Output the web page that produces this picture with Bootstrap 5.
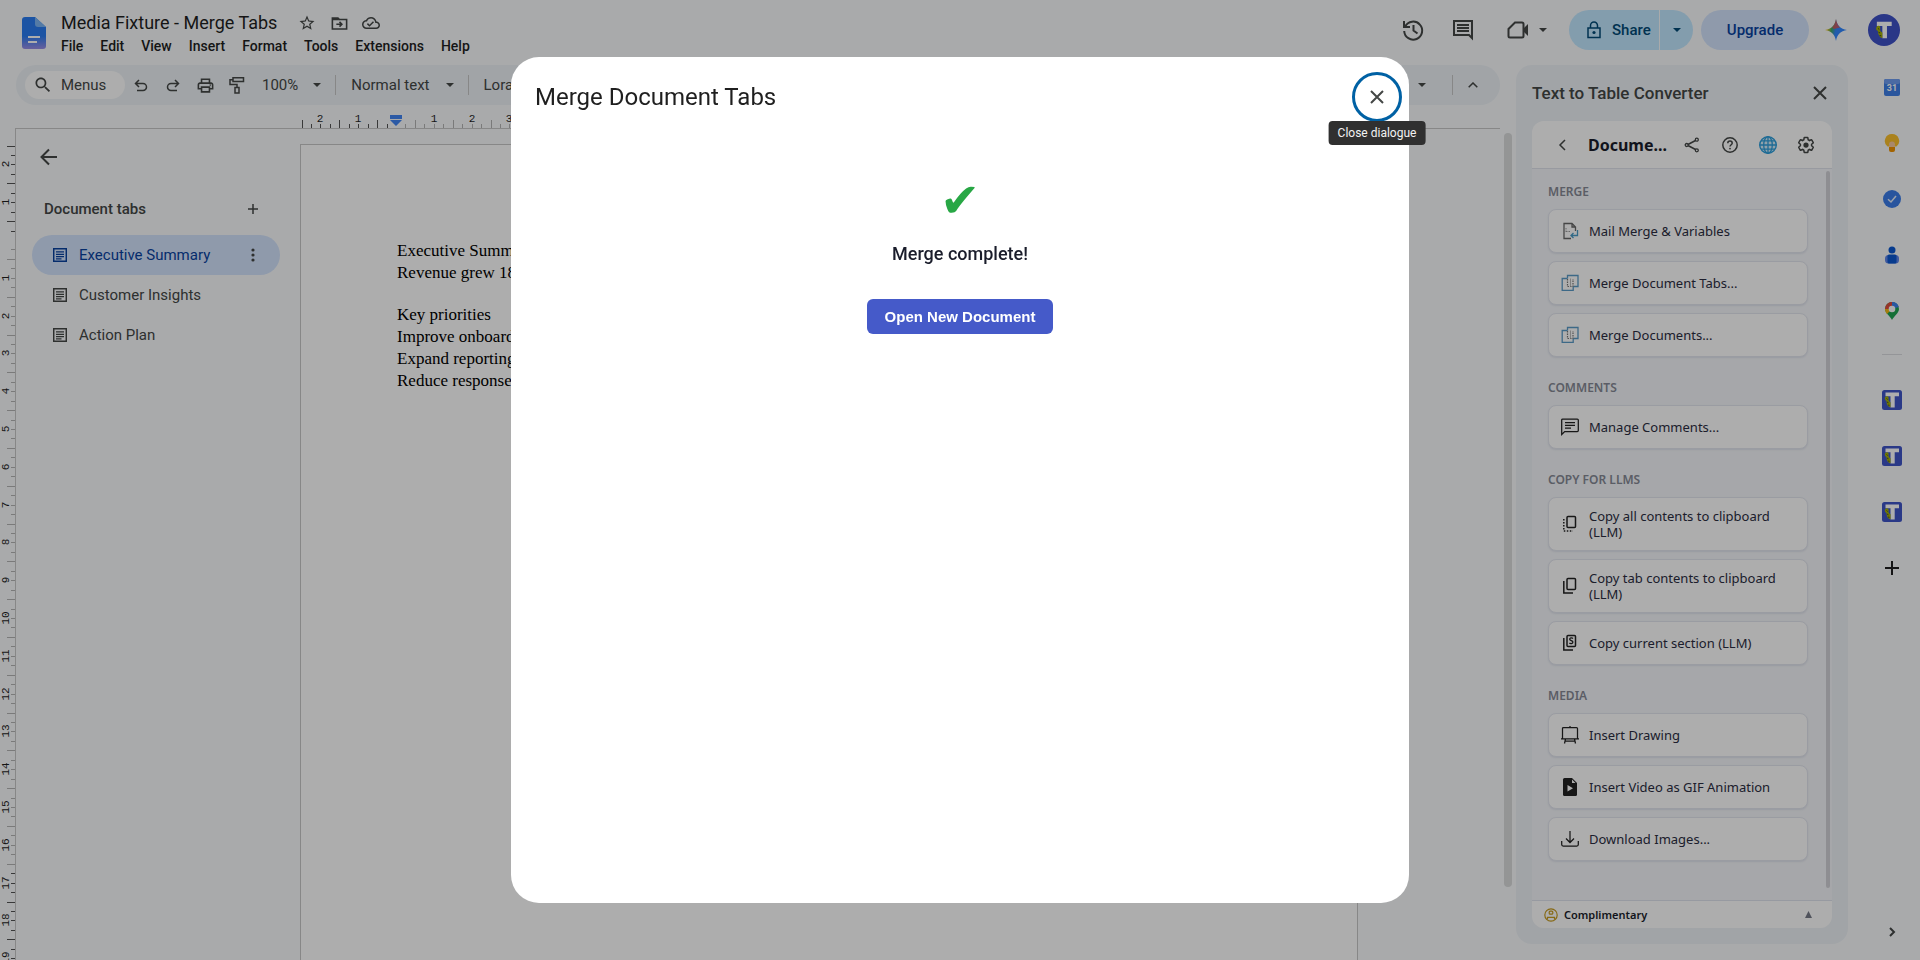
<!DOCTYPE html>
<html lang="en">
<head>
<meta charset="utf-8">
<meta name="viewport" content="width=device-width, initial-scale=1">
<title>Media Fixture - Merge Tabs</title>
<link rel="stylesheet" href="https://cdn.jsdelivr.net/npm/bootstrap@5.3.0/dist/css/bootstrap.min.css">
<style>
  :root { --ink: #1f1f1f; --ink-soft: #444746; --canvas: #f9fbfd; --bar: #edf2f6; --rule: #c7c7c7; }
  body { font-family: Roboto, "Liberation Sans", sans-serif; font-size: 15px; line-height: 20px; color: var(--ink); background: var(--canvas); }
  svg { display: block; flex: none; }
  .bare { border: 0; background: none; padding: 0; color: var(--ink-soft); display: flex; align-items: center; justify-content: center; flex: none; font-size: 15px; line-height: 20px; }
  .sq { width: 32px; height: 32px; }
  .sq-lg { width: 40px; height: 40px; }
  .ln { fill: none; stroke: currentColor; stroke-width: 2; }
  .thin { stroke-width: 1.25; }
  .mid { stroke-width: 1.5; }
  .grow-min { min-width: 0; min-height: 0; }

  .app-header { height: 65px; padding-left: 20px; }
  .title-block { margin-left: 13px; padding-top: 7px; }
  .title-row { height: 32px; gap: 14px; }
  .doc-title { font-size: 18px; line-height: 24px; font-weight: 400; margin: 0; }
  .menu-bar { gap: 17px; margin-top: -3px; font-size: 14px; font-weight: 500; }
  .menu-bar a { color: var(--ink); text-decoration: none; }
  .header-tools { margin-top: 10px; padding-right: 20px; gap: 10px; }
  .call { width: 66px; height: 40px; gap: 9px; }
  .pill { height: 40px; border: 0; font-weight: 500; }
  .share-main { background: #c2e7ff; color: #004a77; width: 90px; border-radius: 20px 0 0 20px; padding-left: 16px; gap: 9px; }
  .share-more { background: #c2e7ff; color: #004a77; width: 33px; border-radius: 0 20px 20px 0; margin-left: 1px; }
  .upgrade { background: #d3e3fd; color: #0842a0; width: 108px; border-radius: 20px; margin: 0 7px 0 8px; }
  .account { margin-left: 12px; }

  .tool-bar { height: 40px; margin: 0 16px; padding-left: 9px; border-radius: 20px; background: var(--bar); color: var(--ink-soft); }
  .menu-search { width: 100px; height: 28px; border-radius: 14px; background: #fff; padding-left: 8px; gap: 8px; }
  .zoom-level { margin: 0 15px 0 9px; }
  .bar-rule { width: 1px; height: 20px; background: var(--rule); flex: none; margin: 0 15px 0 14px; }
  .last-rule { margin: 0 4px 0 26px; }
  .style-name { margin-right: 16px; }
  .hide-menus { margin-right: 11px; }
  .h-ruler { height: 24px; margin: 0 16px 0 15px; border-bottom: 1px solid var(--rule); overflow: hidden; }
  .v-ruler { width: 16px; border-right: 1px solid var(--rule); overflow: hidden; flex: none; }
  .ruler-text { font: 11px "Liberation Mono", monospace; fill: #1f1f1f; text-anchor: middle; }

  .outline { width: 284px; padding: 12px 20px 0 16px; flex: none; }
  .outline-back { margin-left: 1px; }
  .outline-head { height: 32px; margin: 20px 0 10px; padding: 0 11px 0 12px; color: var(--ink-soft); font-weight: 500; }
  .tab-row { height: 40px; border-radius: 20px; padding: 0 11px 0 17px; gap: 8px; color: var(--ink-soft); text-decoration: none; }
  .tab-row.active { background: #d3e3fd; color: #0842a0; }
  .sheet { margin: 15px 158px 0 0; border: 1px solid var(--rule); border-bottom: 0; background: #fff; padding: 95px 96px; font: 17px/22px "Liberation Serif", serif; color: #000; }
  .sheet p { margin: 0; }
  .sheet .second { margin-top: 20px; }
  .page-scroll { width: 8px; margin: 4px 0 73px; border-radius: 4px; background: #dadcdc; right: 4px; top: 0; bottom: 0; }

  .side { width: 332px; margin-bottom: 16px; padding: 0 16px 16px; border-radius: 16px; background: var(--bar); flex: none; }
  .side-title { height: 56px; font-size: 17px; font-weight: 500; color: var(--ink-soft); padding-right: 3px; }
  .side-title .bare { width: 18px; height: 18px; }
  .addon { border-radius: 12px; background: #f5f7fb; overflow: hidden; font-family: "Noto Sans", "Open Sans", sans-serif; }
  .addon-head { height: 48px; background: #fff; border-bottom: 1px solid #e0e3ec; padding: 0 7px 0 14px; }
  .addon-head h2 { font-size: 16px; line-height: 20px; font-weight: 700; width: 84px; padding-left: 11px; color: #1a1d2b; white-space: nowrap; }
  .addon-head .bare { height: 38px; width: 38px; }
  .addon-head .back { width: 31px; }
  .addon-body { padding: 16px 24px 0 16px; }
  .addon-scroll { width: 4px; right: 2px; top: 2px; bottom: 12px; border-radius: 2px; background: #d1d2d7; }
  .group-label { font-size: 12px; line-height: 14px; font-weight: 600; color: #868a96; margin: 0 0 10px; }
  .group + .group { margin-top: 24px; }
  .act { display: flex; align-items: center; gap: 10px; width: 100%; min-height: 44px; padding: 10px 12px; border: 1px solid #e4e6ef; border-radius: 8px; background: #fff; box-shadow: 0 1px 2px rgba(40,50,110,.1); font-size: 13px; line-height: 16px; text-align: left; color: #2b2d42; }
  .act svg { color: #222; }
  .addon-foot { height: 28px; background: #fff; border-top: 1px solid #dfe3ee; padding: 0 20px 0 12px; font-size: 11px; line-height: 14px; font-weight: 600; color: #1a1d2b; gap: 6px; }

  .rail { width: 72px; padding-left: 16px; flex: none; margin-top: -6px; }
  .rail .bare { width: 56px; height: 56px; }
  .rail-rule { width: 20px; height: 1px; background: #dadce0; margin: 15px 0 17px; }
  .rail .add { color: var(--ink); }
  .cal-text { font: 700 9px Roboto, sans-serif; fill: #fff; text-anchor: middle; }

  .modal { background: rgba(0,0,0,.32); }
  .merge-dialog { max-width: 898px; height: calc(100% - 114px); margin: 57px auto; }
  .merge-dialog .modal-content { height: 100%; border: 0; border-radius: 28px; }
  .merge-head { padding: 15px 7px 0 24px; }
  .merge-head h1 { font-size: 24px; line-height: 32px; font-weight: 400; margin: 0; }
  .close-ring { width: 50px; height: 50px; border: 3px solid #0061a4; border-radius: 50%; }
  .tip { top: 49px; left: 50%; transform: translateX(-50%); background: #303030; color: #f2f2f2; border-radius: 4px; font-size: 12px; line-height: 16px; padding: 4px 9px; white-space: nowrap; }
  .tick { font: 48px/48px "DejaVu Sans", sans-serif; color: #28a745; margin-top: 54px; }
  .done { font-size: 18px; line-height: 24px; font-weight: 500; color: #1a1d2b; margin: 18px 0 33px; }
  .open-btn { background: #455ac9; color: #fff; border: 0; border-radius: 6px; font: 700 15px/17px "Liberation Sans", sans-serif; padding: 9px 18px; }
</style>
</head>
<body class="vh-100 overflow-hidden d-flex flex-column">

<svg width="0" height="0" class="position-absolute" aria-hidden="true">
  <symbol id="caret" viewBox="0 0 8 4"><path d="M0 0h8L4 4z" fill="currentColor"/></symbol>
  <symbol id="cross" viewBox="0 0 14 14"><path class="ln" d="M1 1l12 12M13 1L1 13"/></symbol>
  <symbol id="tabdoc" viewBox="0 0 14 14"><path class="ln mid" d="M.7.7h12.6v12.6H.7z"/><path d="M3 3.3h8v1.2H3zM3 5.7h8v1.2H3zM3 8h8v1.2H3zM3 10.200h5.500v1.200H3z" fill="currentColor"/></symbol>
  <symbol id="merge" viewBox="0 0 18 18"><path d="M6.500 4.500V1.500H17v11h-4.500M6.500 4.500H1.200V16.300H12.200V12.500" fill="none" stroke="#5b9bc8" stroke-width="1.300"/><path d="M6.500 5v7.500H12V5" fill="none" stroke="#777" stroke-width="1.200" stroke-dasharray="1.500 1"/><path d="M9.500 4.500v8" stroke="#bbb"/></symbol>
  <symbol id="tlogo" viewBox="0 0 20 20"><path d="M3.500 2.500H17v3.800h-4.300V17.500H8.500V6.300h-5z" fill="#fff"/><path d="M3.500 6.800c1.800-1.500 3.500 0 3 2-.300 2 .500 3 2 3.500v5C6 17 4.500 14 4.500 11 2.800 10.500 2.300 8 3.500 6.800z" fill="#a8b400"/><path d="M4.500 8.500l1.200 1M5 12l1.500.800M6 15l1.500.300" stroke="#333" stroke-width=".8"/></symbol>
  <symbol id="tapp" viewBox="0 0 20 20"><rect width="20" height="20" rx="2.500" fill="#3f55c8"/><use href="#tlogo" width="20" height="20"/></symbol>
</svg>

<header class="app-header d-flex flex-shrink-0 align-items-start">
  <svg class="mt-3" width="28" height="36" viewBox="0 0 28 36"><defs><linearGradient id="dg" x2="0" y2="1"><stop offset=".6" stop-color="#2a7df2"/><stop offset="1" stop-color="#9a8fe8"/></linearGradient></defs><path d="M5 1h10l11 10v19a3 3 0 0 1-3 3H5a3 3 0 0 1-3-3V4a3 3 0 0 1 3-3z" fill="url(#dg)"/><path d="M15 1l11 10h-8a3 3 0 0 1-3-3z" fill="#7db6f5"/><path d="M8 21h12M8 26h9" stroke="#fff" stroke-width="2"/></svg>
  <div class="title-block flex-grow-1">
    <div class="title-row d-flex align-items-center">
      <h1 class="doc-title">Media Fixture - Merge Tabs</h1>
      <div class="d-flex">
        <button class="bare sq" aria-label="Star"><svg width="18" height="18" viewBox="0 0 24 24" fill="currentColor"><path d="M22 9.240l-7.190-.620L12 2 9.190 8.630 2 9.240l5.460 4.730L5.820 21 12 17.270 18.180 21l-1.630-7.030L22 9.240zM12 15.400l-3.760 2.270 1-4.280-3.320-2.880 4.380-.380L12 6.100l1.710 4.040 4.380.380-3.320 2.880 1 4.280L12 15.400z"/></svg></button>
        <button class="bare sq" aria-label="Move"><svg width="19" height="19" viewBox="0 0 24 24"><path class="ln" d="M3 5h7l2 2h9v12H3z"/><path d="M3 5h7l2 3H3z" fill="currentColor"/><path class="ln" d="M8 13h7M12 10l3 3-3 3"/></svg></button>
        <button class="bare sq" aria-label="Saved"><svg width="18" height="18" viewBox="0 0 24 24" fill="currentColor"><path d="M19.350 10.040C18.670 6.590 15.640 4 12 4 9.110 4 6.600 5.640 5.350 8.040 2.340 8.360 0 10.910 0 14c0 3.310 2.690 6 6 6h13c2.760 0 5-2.240 5-5 0-2.640-2.050-4.780-4.650-4.960zM19 18H6c-2.210 0-4-1.790-4-4 0-2.050 1.530-3.760 3.560-3.970l1.070-.110.500-.950C8.080 7.140 9.940 6 12 6c2.620 0 4.880 1.860 5.390 4.430l.300 1.500 1.530.110c1.560.100 2.780 1.410 2.780 2.960 0 1.650-1.350 3-3 3zm-9-3.820l-2.090-2.090L6.500 13.500 10 17l6.010-6.010-1.410-1.410z"/></svg></button>
      </div>
    </div>
    <nav class="menu-bar d-flex"><a href="#">File</a><a href="#">Edit</a><a href="#">View</a><a href="#">Insert</a><a href="#">Format</a><a href="#">Tools</a><a href="#">Extensions</a><a href="#">Help</a></nav>
  </div>
  <div class="header-tools d-flex align-items-center">
    <button class="bare sq-lg" aria-label="Version history"><svg width="24" height="24" viewBox="0 0 24 24"><path class="ln" d="M4.200 8.500A9 9 0 1 1 3.200 13M3 3v6h6M12.500 7v5.500l4 3"/></svg></button>
    <button class="bare sq-lg" aria-label="Comments"><svg width="24" height="24" viewBox="0 0 24 24"><path class="ln" d="M3 3h18v17l-3-3H3z"/><path class="ln" d="M6 7h12M6 10h12M6 13h12"/></svg></button>
    <button class="bare call" aria-label="Join a call"><svg width="24" height="24" viewBox="0 0 24 24"><path class="ln" d="M9 4.500h7a1.500 1.500 0 0 1 1.500 1.500v12a1.500 1.500 0 0 1-1.500 1.500H4A1.500 1.500 0 0 1 2.500 18v-7z"/><path d="M17 11l5-5v12l-5-5z" fill="currentColor"/></svg><svg width="8" height="4"><use href="#caret"/></svg></button>
    <div class="d-flex align-items-center">
      <button class="bare pill share-main justify-content-start"><svg width="18" height="18" viewBox="0 0 18 18"><path class="ln mid" d="M3 7h12v9.500H3zM5.500 7V4.500a3.500 3.500 0 0 1 7 0V7"/><circle cx="9" cy="11.500" r="1.600" fill="currentColor"/></svg>Share</button>
      <button class="bare pill share-more" aria-label="Sharing options"><svg width="8" height="4"><use href="#caret"/></svg></button>
      <button class="bare pill upgrade">Upgrade</button>
      <button class="bare sq-lg" aria-label="Gemini"><svg width="22" height="22" viewBox="0 0 22 22"><defs><linearGradient id="gm" x1="0" y1=".4" x2="1" y2=".6"><stop offset=".1" stop-color="#f0c020"/><stop offset=".3" stop-color="#3fa860"/><stop offset=".5" stop-color="#3186ff"/><stop offset="1" stop-color="#3186ff"/></linearGradient></defs><path d="M11 0c1 6.500 4.500 10 11 11-6.500 1-10 4.500-11 11-1-6.500-4.500-10-11-11C6.500 10 10 6.500 11 0z" fill="url(#gm)"/><path d="M11 0c.6 4 2 6.500 4 8.500L9 10 7 8.500C9 6.500 10.400 4 11 0z" fill="#e8504a" opacity=".75"/></svg></button>
      <button class="bare account" aria-label="Account"><svg width="32" height="32" viewBox="0 0 32 32"><circle cx="16" cy="16" r="16" fill="#3f51c8"/><use href="#tlogo" x="5" y="5" width="22" height="22"/></svg></button>
    </div>
  </div>
</header>

<div class="d-flex flex-grow-1 grow-min">
  <main class="d-flex flex-column flex-grow-1 grow-min">
    <div class="tool-bar d-flex align-items-center flex-shrink-0">
      <button class="bare menu-search justify-content-start"><svg width="20" height="20" viewBox="0 0 24 24" fill="currentColor"><path d="M15.500 14h-.790l-.280-.270C15.410 12.590 16 11.110 16 9.500 16 5.910 13.090 3 9.500 3S3 5.910 3 9.500 5.910 16 9.500 16c1.610 0 3.090-.590 4.230-1.570l.270.280v.790l5 4.990L20.490 19l-4.990-5zm-6 0C7.010 14 5 11.990 5 9.500S7.010 5 9.500 5 14 7.010 14 9.500 11.990 14 9.500 14z"/></svg>Menus</button>
      <button class="bare sq" aria-label="Undo"><svg width="18" height="18" viewBox="0 0 18 18"><path class="ln mid" d="M7 4L3.500 7.500 7 11M4 7.500h7a3.500 3.500 0 0 1 0 7H5"/></svg></button>
      <button class="bare sq" aria-label="Redo"><svg width="18" height="18" viewBox="0 0 18 18"><path class="ln mid" d="M11 4l3.500 3.500L11 11M14 7.500H7a3.500 3.500 0 0 0 0 7h6"/></svg></button>
      <button class="bare sq" aria-label="Print"><svg width="19" height="19" viewBox="0 0 24 24" fill="currentColor"><path d="M19 8h-1V3H6v5H5c-1.660 0-3 1.340-3 3v6h4v4h12v-4h4v-6c0-1.660-1.340-3-3-3zM8 5h8v3H8V5zm8 12v2H8v-4h8v2zm2-2v-2H6v2H4v-4c0-.550.450-1 1-1h14c.550 0 1 .450 1 1v4h-2z"/><circle cx="18" cy="11.500" r="1"/></svg></button>
      <button class="bare sq" aria-label="Paint format"><svg width="18" height="18" viewBox="0 0 18 18"><path class="ln mid" d="M5 1.800h10.500v3.700H5zM5 3.700H2v4.800h7V11M7 11.500h4V17H7z"/></svg></button>
      <span class="zoom-level">100%</span><svg width="8" height="4"><use href="#caret"/></svg>
      <span class="bar-rule"></span>
      <span class="style-name">Normal text</span><svg width="8" height="4"><use href="#caret"/></svg>
      <span class="bar-rule"></span>
      <span>Lora</span>
      <svg class="ms-auto" width="8" height="4"><use href="#caret"/></svg>
      <span class="bar-rule last-rule"></span>
      <button class="bare sq hide-menus" aria-label="Hide menus"><svg width="10" height="6" viewBox="0 0 10 6"><path class="ln mid" d="M.7 5.300L5 1l4.300 4.300"/></svg></button>
    </div>
    <div class="h-ruler flex-shrink-0"><svg id="hRuler" width="1400" height="23"></svg></div>
    <div class="d-flex flex-grow-1 grow-min position-relative">
      <div class="v-ruler"><svg id="vRuler" width="15" height="1200"></svg></div>
      <div class="outline">
        <button class="bare sq outline-back" aria-label="Close tabs"><svg width="18" height="18" viewBox="0 0 18 18"><path class="ln" d="M17 9H2M9 1.500L1.500 9 9 16.500"/></svg></button>
        <div class="outline-head d-flex align-items-center justify-content-between"><span>Document tabs</span><button class="bare sq" aria-label="Add tab"><svg width="10" height="10" viewBox="0 0 10 10"><path class="ln mid" d="M5 0v10M0 5h10"/></svg></button></div>
        <nav>
          <a href="#" class="tab-row active d-flex align-items-center"><svg width="22" height="14"><use href="#tabdoc" x="4" width="14" height="14"/></svg>Executive Summary<svg class="ms-auto" width="32" height="16" viewBox="0 0 32 16" fill="#444746"><circle cx="16" cy="3" r="1.600"/><circle cx="16" cy="8" r="1.600"/><circle cx="16" cy="13" r="1.600"/></svg></a>
          <a href="#" class="tab-row d-flex align-items-center"><svg width="22" height="14"><use href="#tabdoc" x="4" width="14" height="14"/></svg>Customer Insights</a>
          <a href="#" class="tab-row d-flex align-items-center"><svg width="22" height="14"><use href="#tabdoc" x="4" width="14" height="14"/></svg>Action Plan</a>
        </nav>
      </div>
      <article class="sheet flex-grow-1">
        <p>Executive Summary</p><p>Revenue grew 18%</p>
        <p class="second">Key priorities</p><p>Improve onboarding</p><p>Expand reporting</p><p>Reduce response time</p>
      </article>
      <div class="page-scroll position-absolute"></div>
    </div>
  </main>

  <aside class="side d-flex flex-column">
    <div class="side-title d-flex align-items-center justify-content-between flex-shrink-0"><span>Text to Table Converter</span><button class="bare" aria-label="Close panel"><svg width="14" height="14"><use href="#cross"/></svg></button></div>
    <div class="addon d-flex flex-column flex-grow-1 grow-min">
      <div class="addon-head d-flex align-items-center flex-shrink-0">
        <button class="bare back" aria-label="Back"><svg width="8" height="12" viewBox="0 0 8 12"><path class="ln mid" d="M7 1L2 6l5 5"/></svg></button>
        <h2 class="m-0 me-auto">Docume...</h2>
        <button class="bare" aria-label="Share"><svg width="16" height="16" viewBox="0 0 16 16"><path class="ln mid" d="M3 8l9.500-5M3 8l9.500 5"/><g fill="#fff" stroke="currentColor" stroke-width="1.300"><circle cx="2.700" cy="8" r="1.500"/><circle cx="12.800" cy="2.700" r="1.500"/><circle cx="12.800" cy="13.300" r="1.500"/></g></svg></button>
        <button class="bare" aria-label="Help"><svg width="16" height="16" viewBox="0 0 16 16"><circle class="ln mid" cx="8" cy="8" r="7.200"/><path class="ln mid" d="M5.800 6.200c0-2.800 4.400-2.800 4.400 0 0 1.500-2.200 1.700-2.200 3.400"/><circle cx="8" cy="11.600" r=".9" fill="currentColor"/></svg></button>
        <button class="bare" aria-label="Language"><svg width="18" height="18" viewBox="0 0 18 18"><circle cx="9" cy="9" r="8.300" fill="#d5eefb" stroke="#2f9fdc" stroke-width="1.400"/><path d="M9 0v18M.5 9h17M2 4.800h14M2 13.200h14" stroke="#2f9fdc" stroke-width="1.300" fill="none"/><ellipse cx="9" cy="9" rx="4.300" ry="8.300" fill="none" stroke="#2f9fdc" stroke-width="1.300"/></svg></button>
        <button class="bare" aria-label="Settings"><svg width="18" height="18" viewBox="0 0 24 24"><path class="ln" d="M19.430 12.980c.040-.320.070-.640.070-.980s-.030-.660-.070-.980l2.110-1.650c.190-.150.240-.420.120-.640l-2-3.460c-.120-.220-.390-.300-.610-.220l-2.490 1c-.520-.400-1.080-.730-1.690-.980l-.380-2.650C14.460 2.180 14.250 2 14 2h-4c-.250 0-.460.180-.490.420l-.380 2.650c-.610.250-1.170.590-1.690.980l-2.490-1c-.230-.090-.490 0-.610.220l-2 3.460c-.130.220-.070.490.120.640l2.110 1.650c-.040.320-.070.650-.070.980s.030.660.070.980l-2.110 1.650c-.190.150-.240.420-.120.640l2 3.460c.120.220.390.300.610.220l2.490-1c.520.400 1.080.730 1.690.980l.380 2.650c.030.240.240.420.490.420h4c.250 0 .460-.180.490-.420l.380-2.650c.610-.250 1.170-.590 1.690-.980l2.490 1c.230.090.490 0 .610-.220l2-3.460c.120-.220.070-.490-.120-.640z"/><circle cx="12" cy="12" r="3.500" fill="currentColor"/></svg></button>
      </div>
      <div class="addon-body flex-grow-1 grow-min position-relative">
        <section class="group">
          <h3 class="group-label">MERGE</h3>
          <div class="d-grid gap-2">
            <button class="act"><svg width="18" height="18" viewBox="0 0 18 18"><path d="M10 16.500H3V1.500h8l3.500 3.500v4M11 1.500V5h3.500" fill="none" stroke="#666" stroke-width="1.300"/><path d="M5 6v5M5 9.500h4" stroke="#999" stroke-dasharray="1.500 1"/><path d="M16.500 8v5.500H10M12.500 11L10 13.500l2.500 2.500" fill="none" stroke="#4a9cc8" stroke-width="1.300"/></svg>Mail Merge &amp; Variables</button>
            <button class="act"><svg width="18" height="18"><use href="#merge"/></svg>Merge Document Tabs...</button>
            <button class="act"><svg width="18" height="18"><use href="#merge"/></svg>Merge Documents...</button>
          </div>
        </section>
        <section class="group">
          <h3 class="group-label">COMMENTS</h3>
          <div class="d-grid gap-2"><button class="act"><svg width="18" height="18" viewBox="0 0 18 18"><path class="ln thin" d="M.7 16.500V2a1 1 0 0 1 1-1h14.600a1 1 0 0 1 1 1v10.500a1 1 0 0 1-1 1H3.700z"/><path class="ln thin" d="M4 4.500h10M4 7.300h10M4 10h6"/></svg>Manage Comments...</button></div>
        </section>
        <section class="group">
          <h3 class="group-label">COPY FOR LLMS</h3>
          <div class="d-grid gap-2">
            <button class="act"><svg width="18" height="18" viewBox="0 0 18 18"><rect class="ln mid" x="6" y="1.500" width="8.500" height="11" rx="1"/><path class="ln mid" stroke-dasharray="1.500 1.500" d="M2.800 4v12H12"/></svg>Copy all contents to clipboard (LLM)</button>
            <button class="act"><svg width="18" height="18" viewBox="0 0 18 18"><rect class="ln mid" x="6" y="1.500" width="8.500" height="11" rx="1"/><path class="ln mid" d="M2.800 4v12H12"/></svg>Copy tab contents to clipboard (LLM)</button>
            <button class="act"><svg width="18" height="18" viewBox="0 0 18 18"><rect class="ln mid" x="6" y="1.500" width="8.500" height="11" rx="1"/><path class="ln mid" d="M2.800 4v12H12"/><path class="ln thin" d="M12 4.500c-1-1-3.500-.8-3.300.8.200 1.500 3.200 1 3.200 2.700 0 1.800-2.500 2-3.500 1"/></svg>Copy current section (LLM)</button>
          </div>
        </section>
        <section class="group">
          <h3 class="group-label">MEDIA</h3>
          <div class="d-grid gap-2">
            <button class="act"><svg width="18" height="18" viewBox="0 0 18 18"><path class="ln thin" d="M1.500 12.500V2.500a1 1 0 0 1 1-1h13a1 1 0 0 1 1 1v10M0 12.800h18M9 0v1.500M4.500 13l-1 4.500M13.500 13l1 4.500M4 15.200h10"/></svg>Insert Drawing</button>
            <button class="act"><svg width="18" height="18" viewBox="0 0 18 18"><path d="M3.500 0H11l5 5v11.500a1.500 1.500 0 0 1-1.500 1.500h-11A1.500 1.500 0 0 1 2 16.500v-15A1.500 1.500 0 0 1 3.500 0z" fill="#222"/><path d="M11 1.500L14.500 5H11zM6.500 7v6.500L12 10.200z" fill="#fff"/></svg>Insert Video as GIF Animation</button>
            <button class="act"><svg width="18" height="18" viewBox="0 0 18 18"><path class="ln thin" d="M.7 11v3.500a1.500 1.500 0 0 0 1.500 1.500h13.600a1.500 1.500 0 0 0 1.500-1.500V11M9 1v11.500M5 8.500l4 4 4-4"/></svg>Download Images...</button>
          </div>
        </section>
        <div class="addon-scroll position-absolute"></div>
      </div>
      <div class="addon-foot d-flex align-items-center flex-shrink-0"><svg width="14" height="14" viewBox="0 0 14 14" fill="none" stroke="#c79c20" stroke-width="1.200"><circle cx="7" cy="7" r="6.200"/><rect x="5.200" y="3.200" width="3.600" height="3" rx="1"/><path d="M3.500 11.500V9.300h7v2.200"/></svg>Complimentary<svg class="ms-auto" width="7" height="7" viewBox="0 0 7 7"><path d="M3.500 0L7 7H0z" fill="#777b88"/></svg></div>
    </div>
  </aside>

  <nav class="rail d-flex flex-column align-items-center">
    <button class="bare" aria-label="Calendar"><svg width="16" height="18" viewBox="0 0 16 18"><rect y="1" width="16" height="17" rx="2" fill="#3f7fe8"/><rect y="1" width="16" height="5" rx="2" fill="#6f9df0"/><text class="cal-text" x="8" y="12.500">31</text></svg></button>
    <button class="bare" aria-label="Keep"><svg width="16" height="20" viewBox="0 0 16 20"><path d="M8 1a7 7 0 0 1 4.500 12.500h-9A7 7 0 0 1 8 1z" fill="#fbc02d"/><circle cx="8" cy="11.500" r="3" fill="#f9c9a0"/><path d="M5 14h6v3a2 2 0 0 1-2 2H7a2 2 0 0 1-2-2z" fill="#f09300"/></svg></button>
    <button class="bare" aria-label="Tasks"><svg width="18" height="18" viewBox="0 0 18 18"><circle cx="9" cy="9" r="9" fill="#3b7de9"/><path d="M5 9.200l3 2.800 5-6" stroke="#e6eefc" stroke-width="1.500" fill="none"/></svg></button>
    <button class="bare" aria-label="Contacts"><svg width="14" height="18" viewBox="0 0 14 18"><circle cx="7" cy="4" r="3.500" fill="#0b57d0"/><rect y="9" width="14" height="8.500" rx="3.500" fill="#5f86ea"/><rect x="2.500" y="8.500" width="9" height="9" rx="1.500" fill="#0b57d0"/></svg></button>
    <button class="bare" aria-label="Maps"><svg width="14" height="18" viewBox="0 0 14 18"><path d="M7 0a7 7 0 0 1 7 7c0 4-5 7-7 11C5 14 0 11 0 7a7 7 0 0 1 7-7z" fill="#20a452"/><path d="M7 7L2 2a7 7 0 0 1 7-1.700z" fill="#e64b3c"/><path d="M7 7H0a7 7 0 0 1 2-5z" fill="#e64b3c"/><path d="M7 7V0a7 7 0 0 1 6.800 5z" fill="#3f82ee"/><path d="M7 7l-5 5A7 7 0 0 1 0 7z" fill="#f5b914"/><circle cx="7" cy="7" r="3.300" fill="#fff"/></svg></button>
    <div class="rail-rule"></div>
    <button class="bare" aria-label="Text to Table Converter"><svg width="20" height="20"><use href="#tapp"/></svg></button>
    <button class="bare" aria-label="Text to Table add-on"><svg width="20" height="20"><use href="#tapp"/></svg></button>
    <button class="bare" aria-label="Text tools add-on"><svg width="20" height="20"><use href="#tapp"/></svg></button>
    <button class="bare add" aria-label="Get add-ons"><svg width="14" height="14" viewBox="0 0 14 14"><path class="ln" d="M7 0v14M0 7h14"/></svg></button>
    <button class="bare mt-auto" aria-label="Hide side panel"><svg width="8" height="10" viewBox="0 0 8 10"><path class="ln" d="M2 1l4 4-4 4"/></svg></button>
  </nav>
</div>

<div class="modal d-block" role="dialog" aria-modal="true" aria-labelledby="mergeTitle">
  <div class="modal-dialog merge-dialog">
    <div class="modal-content">
      <div class="merge-head d-flex align-items-center justify-content-between">
        <h1 id="mergeTitle">Merge Document Tabs</h1>
        <div class="position-relative">
          <button class="bare close-ring" aria-label="Close dialogue"><svg width="14" height="14"><use href="#cross"/></svg></button>
          <div class="tip position-absolute" role="tooltip">Close dialogue</div>
        </div>
      </div>
      <div class="d-flex flex-column align-items-center text-center">
        <div class="tick">✔</div>
        <p class="done">Merge complete!</p>
        <button class="open-btn">Open New Document</button>
      </div>
    </div>
  </div>
</div>

<script src="https://cdn.jsdelivr.net/npm/bootstrap@5.3.0/dist/js/bootstrap.bundle.min.js"></script>
<script>
  // Rulers: one label per centimetre, a tick each quarter, margins drawn darker
  const CM = 37.8;
  function ruler(svg, vertical, zero, fromQ, toQ, bodyEnd, depth) {
    let out = '';
    for (let q = fromQ; q <= toQ; q++) {
      const p = Math.round(zero + q * CM / 4);
      const len = Math.abs(q % 4) === 2 ? 8 : 4;
      const col = q > 0 && q / 4 < bodyEnd ? '#b4b4b4' : '#555';
      if (q !== 0) out += vertical
        ? `<rect x="${depth - len}" y="${p}" width="${len}" height="1" fill="${col}"/>`
        : `<rect x="${p}" y="${depth - len}" width="1" height="${len}" fill="${col}"/>`;
      if (q % 4 === 0 && q !== 0) out += vertical
        ? `<text class="ruler-text" transform="translate(9 ${p}) rotate(-90)">${Math.abs(q / 4)}</text>`
        : `<text class="ruler-text" x="${p}" y="${depth - 6}">${Math.abs(q / 4)}</text>`;
    }
    svg.innerHTML = out + (vertical ? '' :
      `<path d="M${zero - 6} 10h12v4h-12zM${zero - 6} 15h12l-6 6z" fill="#4285f4"/>`);
  }
  ruler(document.getElementById('hRuler'), false, 381, -10, 14, 99, 23);
  ruler(document.getElementById('vRuler'), true, 111, -10, 77, 16.7, 15);
</script>
</body>
</html>
